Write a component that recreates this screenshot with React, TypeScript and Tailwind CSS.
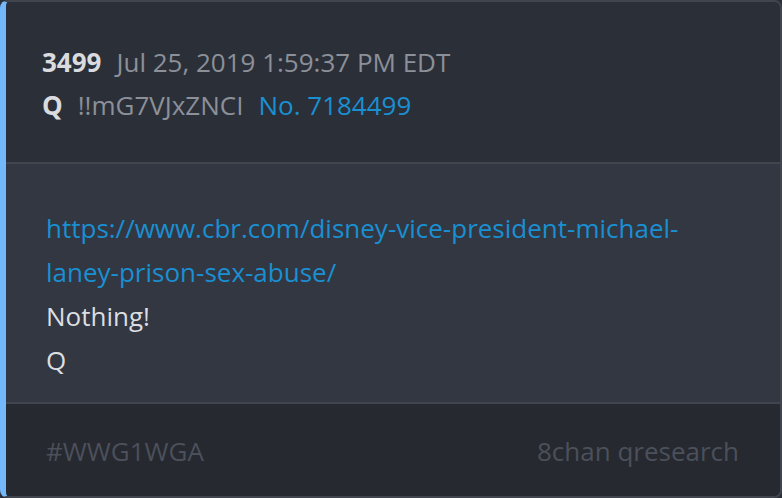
export default function App() {
  return (
    <div className="w-[782px] h-[498px] bg-[#2b2f38]" style={{ fontFamily: '"Open Sans", sans-serif' }}>
      <div className="h-full flex flex-col rounded-lg overflow-hidden border-t-2 border-r-2 border-b-2 border-l-[6px] border-t-[#40454e] border-r-[#40454e] border-b-[#40454e] border-l-[#74b8fc]">
        {/* Header */}
        <div className="bg-[#2b2f38] pl-[36px] pt-[39px] pb-[35px] text-[26px] leading-[43px]">
          <div className="flex items-baseline gap-[15px]">
            <span className="font-bold text-[#d9dbdf]">3499</span>
            <span className="text-[#8b9099]">Jul 25, 2019 1:59:37 PM EDT</span>
          </div>
          <div className="flex items-baseline gap-[15px]">
            <span className="font-bold text-[#d9dbdf]">Q</span>
            <span className="text-[#8b9099]">!!mG7VJxZNCI</span>
            <span className="text-[#1a8fd2]">No. 7184499</span>
          </div>
        </div>
        <div className="h-[2px] bg-[#40454e]" />

        {/* Body */}
        <div className="bg-[#323741] pl-[40px] pr-[40px] pt-[42px] pb-[20px] text-[26px] leading-[44px] text-[#dcdee1]">
          <a className="text-[#1a8fd2] block">
            https://www.cbr.com/disney-vice-president-michael-
            <br />
            laney-prison-sex-abuse/
          </a>
          <div>Nothing!</div>
          <div>Q</div>
        </div>
        <div className="h-[2px] bg-[#40454e]" />

        {/* Footer */}
        <div className="flex-1 bg-[#262930] flex items-center justify-between pl-[40px] pr-[41px] pt-[3px] text-[26px] text-[#4b505a]">
          <span>#WWG1WGA</span>
          <span>8chan qresearch</span>
        </div>
      </div>
    </div>
  );
}
